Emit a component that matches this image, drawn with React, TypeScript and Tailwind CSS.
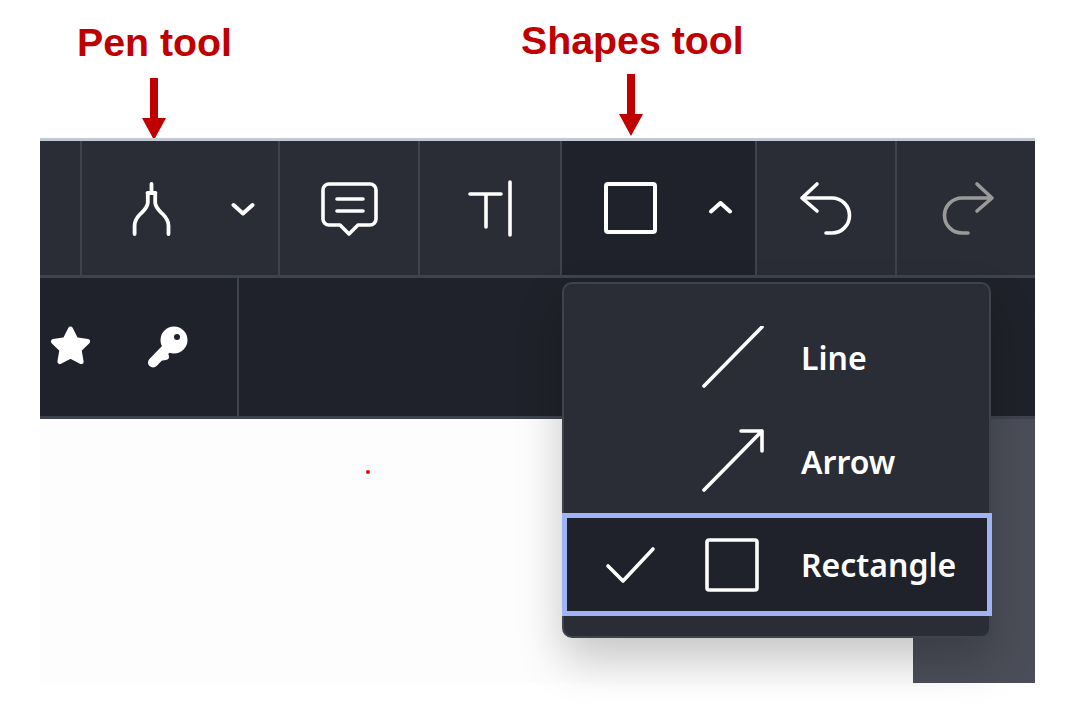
import React from "react";

const Ic = ({ box, className = "", children }: { box: [number, number, number, number]; className?: string; children: React.ReactNode }) => (
  <svg
    viewBox={box.join(" ")}
    width={box[2]}
    height={box[3]}
    fill="none"
    stroke="currentColor"
    strokeLinecap="round"
    strokeLinejoin="round"
    strokeWidth={3.6}
    className={"block shrink-0 " + className}
  >
    {children}
  </svg>
);

const DownArrow = () => (
  <svg viewBox="0 0 24 62" width={24} height={62} className="block mx-auto">
    <path d="M8 0h8v40h8L12 62 0 40h8z" fill="#c00000" />
  </svg>
);

export default function App() {
  return (
    <div className="w-[1072px] h-[724px] bg-white overflow-hidden font-['Noto_Sans',sans-serif] text-white">
      <div className="flex h-[138px] text-[39.3px] leading-[45px] font-bold text-[#c00000] font-['Liberation_Sans',sans-serif]">
        <div className="ml-[77px] w-[153px] pt-[20px] flex flex-col whitespace-nowrap">
          <div>Pen tool</div>
          <div className="mt-[13px]"><DownArrow /></div>
        </div>
        <div className="ml-[291px] w-[222px] pt-[18px] flex flex-col whitespace-nowrap">
          <div>Shapes tool</div>
          <div className="mt-[11px] -ml-[3px]"><DownArrow /></div>
        </div>
      </div>

      <div className="relative ml-[40px] w-[995px]">
        <div className="flex h-[140px] bg-[#2a2d36] border-t-[3px] border-t-[#c3c9d4] border-b-[3px] border-b-[#3f434e]">
          <div className="w-[42px] border-r-2 border-[#3f434e]" />
          <div className="w-[198px] border-r-2 border-[#3f434e] flex items-center pl-[49px] pt-[1px]">
            <Ic box={[131, 180, 42, 58]}>
              <path d="M151.500 184v8M147.500 193h8M147.800 193v9.500c0 5-4 8-7.500 11.500-4 4-5.700 7-5.700 11.500v8.500M155.200 193v9.500c0 5 4 8 7.500 11.500 4 4 5.800 7 5.800 11.500v8.500" strokeWidth={3.8} />
            </Ic>
            <Ic box={[230, 202, 26, 14]} className="ml-[57px]">
              <path d="M233.500 205l9.500 8.500 9.500-8.500" strokeWidth={4} />
            </Ic>
          </div>
          <div className="w-[140px] border-r-2 border-[#3f434e] flex items-center justify-center pl-[2px] pt-[1px]">
            <Ic box={[319, 180, 62, 58]}>
              <path d="M329 184h41a6 6 0 0 1 6 6v29a6 6 0 0 1-6 6h-12l-9 9-9-9h-11a6 6 0 0 1-6-6v-29a6 6 0 0 1 6-6z" />
              <path d="M337 199h26M337 211h26" />
            </Ic>
          </div>
          <div className="w-[142px] border-r-2 border-[#3f434e] flex items-center justify-center pl-[2px] pt-[1px]">
            <Ic box={[465, 178, 50, 60]}>
              <path d="M469 193h31M485 193v33M509 181v53" />
            </Ic>
          </div>
          <div className="w-[195px] border-r-2 border-[#3f434e] bg-[#1f222a] flex items-center pl-[41px]">
            <Ic box={[603, 181, 55, 55]}>
              <rect x="606" y="184" width="49" height="48" rx="2" strokeWidth={4} />
            </Ic>
            <Ic box={[708, 202, 26, 14]} className="ml-[50px]">
              <path d="M711 212.500l9.500-8.500 9.500 8.500" strokeWidth={4} />
            </Ic>
          </div>
          <div className="w-[140px] border-r-2 border-[#3f434e] flex items-center justify-center pl-[2px] pt-[1px]">
            <Ic box={[798, 180, 56, 56]}>
              <path d="M816 183l-15 14 15 13M801 197h30a17.500 17.500 0 0 1 0 35h-6" />
            </Ic>
          </div>
          <div className="w-[138px] flex items-center pl-[43px] pt-[1px] text-[#9a9a9a]">
            <Ic box={[940, 180, 56, 56]}>
              <path d="M977 183l15 14-15 13M992 197h-30a17.500 17.500 0 0 0 0 35h6" />
            </Ic>
          </div>
        </div>

        <div className="flex h-[141px] bg-[#1f222a] border-b-[3px] border-[#3f434e]">
          <div className="w-[199px] border-r-2 border-[#3f434e] flex items-center pl-[8px]">
            <Ic box={[48, 324, 45, 45]} className="-mt-[1px]">
              <path
                d="M70.500 329l5.300 10.700 11.800 1.700-8.500 8.400 2 11.800-10.600-5.600-10.600 5.600 2-11.800-8.500-8.400 11.800-1.700z"
                fill="currentColor"
                strokeWidth={5}
              />
            </Ic>
            <Ic box={[145, 325, 45, 46]} className="ml-[52px] -mt-[1px]">
              <path d="M170 346l-17 17.500" strokeWidth={10} />
              <path d="M162 358l3.500-.5" strokeWidth={7} />
              <circle cx="174" cy="341" r="13.500" fill="currentColor" stroke="none" />
              <circle cx="177" cy="338" r="3" fill="#1f222a" stroke="none" />
            </Ic>
          </div>
        </div>

        <div className="relative flex justify-end h-[264px] bg-[#fdfdfd]">
          <div className="w-[122px] bg-[#4b4e58]" />
          <div className="absolute left-[326px] top-[51px] w-[4px] h-[4px] rounded-full bg-[#f00000]" />
        </div>

        <div className="absolute left-[522px] top-[144px] w-[429px] h-[356px] rounded-[10px] bg-[#2a2d36] border-2 border-[#3f434e] pt-[22px] shadow-[0_22px_45px_rgba(0,0,0,0.22)]">
          <div className="flex items-center h-[104px] -mx-[2px] text-[32px] font-semibold">
            <div className="w-[203px] flex justify-end">
              <Ic box={[700, 326, 65, 65]}>
                <path d="M704 386l58-59" />
              </Ic>
            </div>
            <span className="ml-[36px]">Line</span>
          </div>
          <div className="flex items-center h-[103px] -mx-[2px] text-[32px] font-semibold">
            <div className="w-[203px] flex justify-end">
              <Ic box={[700, 428, 65, 65]}>
                <path d="M704 489l58-59M741 430h21v20" />
              </Ic>
            </div>
            <span className="ml-[36px]">Arrow</span>
          </div>
          <div className="flex items-center h-[103px] -mx-[2px] -mr-[3px] bg-[#1f222a] border-[5px] border-[#a0b4f5] text-[32px] font-semibold">
            <Ic box={[605, 546, 51, 38]} className="ml-[38px]">
              <path d="M608 566l15 15 30-32" />
            </Ic>
            <Ic box={[704, 536, 56, 56]} className="ml-[48px]">
              <rect x="707" y="539" width="50" height="50" rx="2" />
            </Ic>
            <span className="ml-[41px] whitespace-nowrap">Rectangle</span>
          </div>
        </div>
      </div>
    </div>
  );
}
